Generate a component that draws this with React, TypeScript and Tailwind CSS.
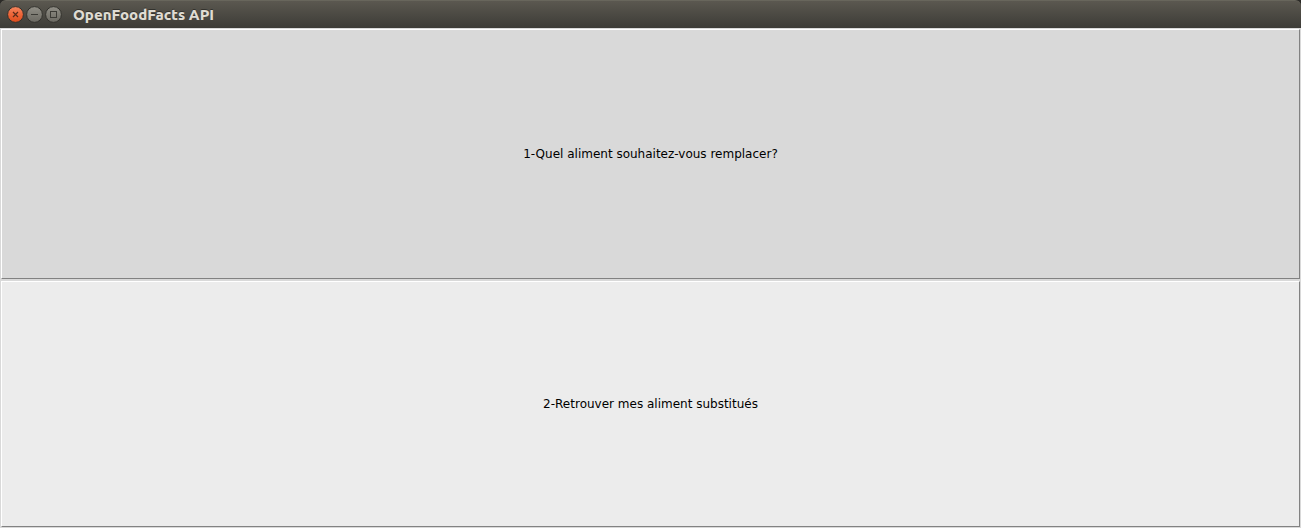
import type { ReactNode } from 'react';

type ControlProps = { label: string; tone: string; children: ReactNode };

function WindowControl({ label, tone, children }: ControlProps) {
  return (
    <button type="button" aria-label={label} className="block size-[17px]">
      <svg viewBox="0 0 17 17" className="block size-full" fill="none">
        <defs>
          <linearGradient id={`fill-${tone}`} x1="0" y1="0" x2="0" y2="1">
            <stop offset="0" stopColor={tone === 'close' ? '#f4865f' : '#918f87'} />
            <stop offset="0.5" stopColor={tone === 'close' ? '#ee6538' : '#7d7b73'} />
            <stop offset="1" stopColor={tone === 'close' ? '#dc4c1c' : '#6b6962'} />
          </linearGradient>
        </defs>
        <circle cx="8.5" cy="8.5" r="7.9" fill={`url(#fill-${tone})`} stroke="#33322d" strokeWidth="1" />
        {children}
      </svg>
    </button>
  );
}

function TitleBar() {
  return (
    <header className="flex h-7 items-center rounded-t-md border-t border-[#68665c] bg-linear-to-b from-[#5b5850] to-[#3d3c37] pl-[7px]">
      <div className="flex gap-0.5">
        <WindowControl label="Fermer" tone="close">
          <path d="M6 6l5 5M11 6l-5 5" stroke="#5a2c1a" strokeWidth="1.2" />
        </WindowControl>
        <WindowControl label="Réduire" tone="minimize">
          <path d="M5 8.5h7" stroke="#3c3b36" />
        </WindowControl>
        <WindowControl label="Agrandir" tone="maximize">
          <rect x="5.5" y="5.5" width="6" height="6" stroke="#3c3b36" />
        </WindowControl>
      </div>
      <h1 className="ml-[11px] font-['Ubuntu','Open_Sans',sans-serif] text-[15px] leading-5 font-extrabold text-[#dfdbd2] [text-shadow:0_-1px_0_#33322d]">
        OpenFoodFacts API
      </h1>
    </header>
  );
}

function MenuButton({ children }: { children: ReactNode }) {
  return (
    <button
      type="button"
      className="border border-t-white border-r-[#828282] border-b-[#828282] border-l-white bg-[#d9d9d9] text-xs text-black last:bg-[#ececec]"
    >
      {children}
    </button>
  );
}

export default function App() {
  return (
    <div className="flex min-h-screen flex-col bg-[#2b2a27]">
      <TitleBar />
      <main className="grid grow grid-rows-[125fr_123fr] gap-0.5 bg-[#d9d9d9] p-px font-['DejaVu_Sans',sans-serif]">
        <MenuButton>1-Quel aliment souhaitez-vous remplacer?</MenuButton>
        <MenuButton>2-Retrouver mes aliment substitués</MenuButton>
      </main>
    </div>
  );
}
